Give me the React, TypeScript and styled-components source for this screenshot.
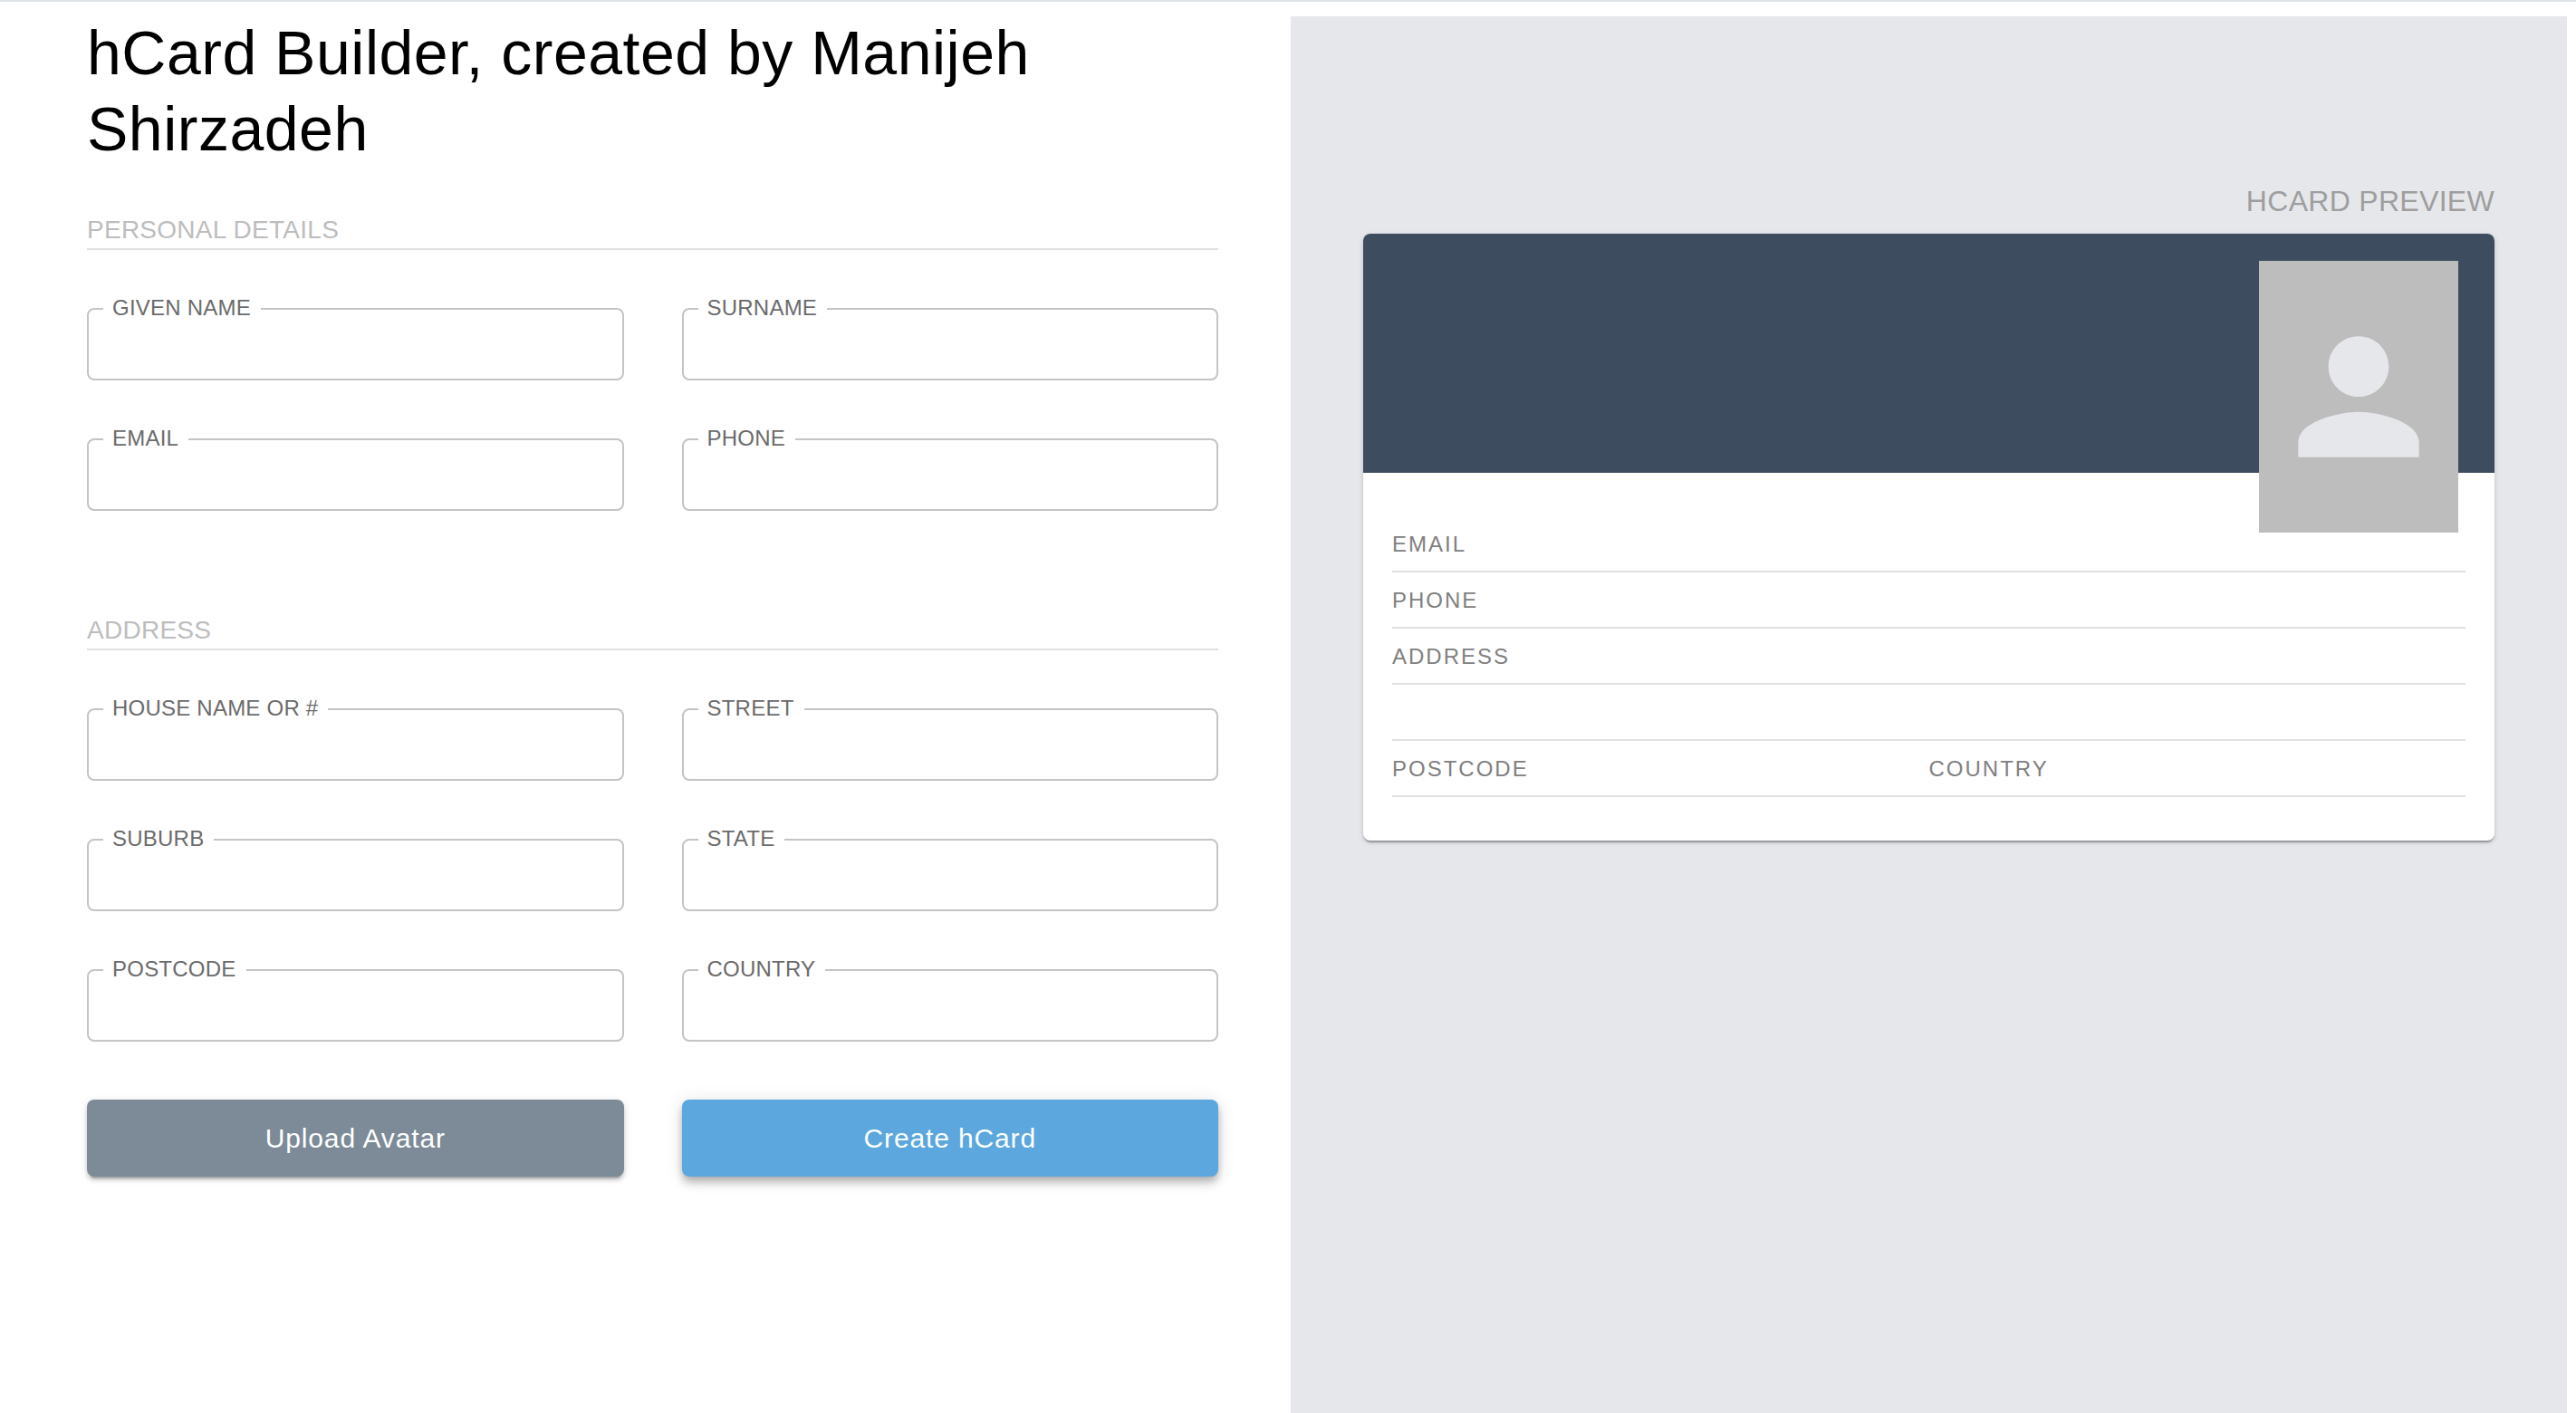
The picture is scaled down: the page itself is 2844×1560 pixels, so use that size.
import React, { useState } from "react";
import styled, { createGlobalStyle } from "styled-components";

const GlobalStyle = createGlobalStyle`
  *, *::before, *::after { box-sizing: border-box; }
  body {
    margin: 0;
    background: #ffffff;
    color: #000000;
    font-family: "Liberation Sans", Helvetica, Arial, sans-serif;
  }
`;

const Page = styled.main`
  display: grid;
  grid-template-columns: minmax(0, 1fr) minmax(0, 1fr);
  min-height: 100vh;
  padding: 0 10px 0 16px;
  border-top: 2px solid #dfe3e8;
`;

const Builder = styled.form`
  padding: 14px 80px 64px;
`;

const Title = styled.h1`
  margin: 0 0 54px;
  font-size: 68px;
  font-weight: 400;
  line-height: 84px;
  letter-spacing: 0.00735em;
`;

const Section = styled.section`
  margin-bottom: 116px;

  &:last-of-type {
    margin-bottom: 64px;
  }
`;

const SectionTitle = styled.h2`
  margin: 0 0 52px;
  padding-bottom: 4px;
  border-bottom: 2px solid #e0e0e0;
  color: #bdbdbd;
  font-size: 28px;
  font-weight: 400;
  line-height: 32px;
  letter-spacing: 0.00938em;
  text-transform: uppercase;
`;

const FieldGrid = styled.div`
  display: grid;
  grid-template-columns: repeat(2, minmax(0, 1fr));
  gap: 52px 64px;
`;

const Field = styled.fieldset`
  min-width: 0;
  margin: 0;
  padding: 0 16px;
  border: 2px solid #c4c4c4;
  border-radius: 8px;

  &:focus-within {
    border-color: #5ba7de;
  }
`;

const Legend = styled.legend`
  padding: 0 11px 2px 10px;
  color: #6b6b6b;
  font-size: 24px;
  line-height: 24px;
  letter-spacing: 0.00938em;
  text-transform: uppercase;
`;

const Input = styled.input`
  display: block;
  width: 100%;
  height: 64px;
  padding: 0 10px 8px;
  border: 0;
  outline: 0;
  background: transparent;
  color: #212121;
  font: inherit;
  font-size: 32px;
`;

const Actions = styled.div`
  display: grid;
  grid-template-columns: repeat(2, minmax(0, 1fr));
  gap: 64px;
`;

const Button = styled.button<{ $primary?: boolean }>`
  padding: 24px 32px;
  border: 0;
  border-radius: 8px;
  background: ${(p) => (p.$primary ? "#5ba7de" : "#7c8b97")};
  box-shadow: ${(p) =>
    p.$primary
      ? "0 4px 8px -2px rgba(0,0,0,.2), 0 8px 10px 0 rgba(0,0,0,.14), 0 2px 20px 0 rgba(0,0,0,.12)"
      : "0 6px 2px -4px rgba(0,0,0,.2), 0 4px 4px 0 rgba(0,0,0,.14), 0 2px 10px 0 rgba(0,0,0,.12)"};
  color: #ffffff;
  cursor: pointer;
  font: inherit;
  font-size: 30px;
  line-height: 37px;
  letter-spacing: 0.02857em;
`;

const Preview = styled.aside`
  margin-top: 16px;
  padding: 184px 80px 64px;
  background: #e6e7eb;
`;

const PreviewTitle = styled.h2`
  margin: 0 0 16px;
  color: #9e9e9e;
  font-size: 32px;
  font-weight: 400;
  line-height: 40px;
  letter-spacing: 0.00938em;
  text-align: right;
  text-transform: uppercase;
`;

const Card = styled.article`
  border-radius: 8px;
  background: #ffffff;
  box-shadow: 0 4px 2px -2px rgba(0, 0, 0, 0.2), 0 2px 2px 0 rgba(0, 0, 0, 0.14),
    0 2px 6px 0 rgba(0, 0, 0, 0.12);
`;

const CardHeader = styled.header`
  display: flex;
  align-items: flex-start;
  justify-content: flex-end;
  height: 264px;
  padding: 30px 40px;
  border-radius: 8px 8px 0 0;
  background: #3d4d5f;
`;

const CardName = styled.p`
  flex: 1;
  align-self: flex-end;
  margin: 0;
  color: #ffffff;
  font-size: 48px;
  line-height: 56px;
`;

const Avatar = styled.div`
  display: flex;
  flex: none;
  align-items: center;
  justify-content: center;
  width: 220px;
  height: 300px;
  background: #bdbdbd;
  color: #e6e7eb;
`;

const Details = styled.dl`
  display: grid;
  grid-template-columns: repeat(2, minmax(0, 1fr));
  margin: 0;
  padding: 48px 32px;
`;

const Detail = styled.div<{ $half?: boolean }>`
  display: flex;
  grid-column: ${(p) => (p.$half ? "auto" : "1 / -1")};
  align-items: center;
  gap: 24px;
  height: 62px;
  padding-top: 2px;
  border-bottom: 2px solid #e0e0e0;
`;

const Term = styled.dt`
  color: #808080;
  font-size: 24px;
  line-height: 32px;
  letter-spacing: 2px;
  text-transform: uppercase;
`;

const Value = styled.dd`
  margin: 0;
  font-size: 28px;
  line-height: 32px;
`;

type Values = Record<string, string>;

const personal = [
  ["given", "Given name"],
  ["surname", "Surname"],
  ["email", "Email"],
  ["phone", "Phone"],
];

const address = [
  ["house", "House name or #"],
  ["street", "Street"],
  ["suburb", "Suburb"],
  ["state", "State"],
  ["postcode", "Postcode"],
  ["country", "Country"],
];

function PersonIcon() {
  return (
    <svg width="200" height="200" viewBox="0 0 24 24" fill="currentColor" aria-hidden="true">
      <path d="M12 12c2.21 0 4-1.79 4-4s-1.79-4-4-4-4 1.79-4 4 1.79 4 4 4zm0 2c-2.67 0-8 1.34-8 4v2h16v-2c0-2.66-5.33-4-8-4z" />
    </svg>
  );
}

export default function App() {
  const [values, setValues] = useState<Values>({});
  const get = (...keys: string[]) =>
    keys.map((k) => values[k]).filter(Boolean).join(" ");

  const renderFields = (fields: string[][]) => (
    <FieldGrid>
      {fields.map(([id, label]) => (
        <Field key={id}>
          <Legend>
            <label htmlFor={id}>{label}</label>
          </Legend>
          <Input
            id={id}
            type="text"
            value={values[id] ?? ""}
            onChange={(e) => setValues({ ...values, [id]: e.target.value })}
          />
        </Field>
      ))}
    </FieldGrid>
  );

  return (
    <>
      <GlobalStyle />
      <Page>
        <Builder onSubmit={(e) => e.preventDefault()}>
          <Title>hCard Builder, created by Manijeh Shirzadeh</Title>
          <Section>
            <SectionTitle>Personal details</SectionTitle>
            {renderFields(personal)}
          </Section>
          <Section>
            <SectionTitle>Address</SectionTitle>
            {renderFields(address)}
          </Section>
          <Actions>
            <Button type="button">Upload Avatar</Button>
            <Button type="submit" $primary>
              Create hCard
            </Button>
          </Actions>
        </Builder>

        <Preview>
          <PreviewTitle>hCard preview</PreviewTitle>
          <Card>
            <CardHeader>
              <CardName>{get("given", "surname")}</CardName>
              <Avatar>
                <PersonIcon />
              </Avatar>
            </CardHeader>
            <Details>
              <Detail>
                <Term>Email</Term>
                <Value>{get("email")}</Value>
              </Detail>
              <Detail>
                <Term>Phone</Term>
                <Value>{get("phone")}</Value>
              </Detail>
              <Detail>
                <Term>Address</Term>
                <Value>{get("house", "street")}</Value>
              </Detail>
              <Detail>
                <Value>{get("suburb", "state")}</Value>
              </Detail>
              <Detail $half>
                <Term>Postcode</Term>
                <Value>{get("postcode")}</Value>
              </Detail>
              <Detail $half>
                <Term>Country</Term>
                <Value>{get("country")}</Value>
              </Detail>
            </Details>
          </Card>
        </Preview>
      </Page>
    </>
  );
}
